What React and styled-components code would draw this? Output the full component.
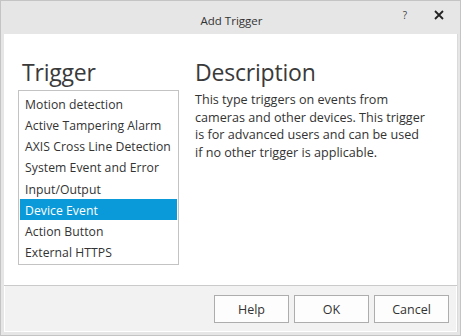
import React from "react";
import styled, { createGlobalStyle } from "styled-components";

const Global = createGlobalStyle`
  html, body { margin: 0; padding: 0; background: #e6e6e6; }
  body { font-family: "Open Sans", "Noto Sans", sans-serif; }
  * { box-sizing: border-box; }
`;

const Window = styled.div`
  width: 461px;
  height: 336px;
  border: 1px solid #c4c4c4;
  background: #e6e6e6;
  display: flex;
  flex-direction: column;
`;

const TitleBar = styled.div`
  height: 33px;
  position: relative;
  display: flex;
  align-items: center;
  justify-content: center;
  flex-shrink: 0;
`;

const Title = styled.div`
  font-size: 11.5px;
  color: #333;
  padding-top: 5px;
  padding-left: 2px;
`;

const Controls = styled.div`
  position: absolute;
  right: 16px;
  top: 7px;
  display: flex;
  align-items: center;
  gap: 27px;
`;

const HelpMark = styled.span`
  font-size: 10px;
  color: #444;
`;

const Body = styled.div`
  flex: 1;
  margin: 0 2px 3px 3px;
  background: #fff;
  border-right: 1px solid #dadada;
  display: flex;
  flex-direction: column;
`;

const Content = styled.div`
  flex: 1;
  display: flex;
  padding: 23px 0 0 14px;
  gap: 16px;
  border-bottom: 1px solid #cacaca;
`;

const Column = styled.div`
  display: flex;
  flex-direction: column;
  width: ${(p) => p.$w || "auto"};
`;

const Heading = styled.div`
  font-size: 23px;
  font-weight: 400;
  color: #3a3a3a;
  line-height: 30px;
  height: 30px;
  margin-left: ${(p) => p.$ml || 0}px;
  letter-spacing: -0.2px;
`;

const List = styled.div`
  margin-top: 3px;
  border: 1px solid #c3c3c3;
  height: 175px;
  padding: 1.5px 1px;
  display: flex;
  flex-direction: column;
`;

const Item = styled.div`
  height: 21.4px;
  line-height: 21.4px;
  padding: 1px 0 0 5px;
  font-size: 12.2px;
  color: ${(p) => (p.$sel ? "#fff" : "#333")};
  background: ${(p) => (p.$sel ? "#0a9ad9" : "transparent")};
  white-space: nowrap;
  letter-spacing: 0.05px;
  overflow: hidden;
`;

const Text = styled.p`
  margin: 4px 0 0 0;
  font-size: 12.6px;
  line-height: 17.5px;
  color: #333;
  white-space: nowrap;
`;

const Footer = styled.div`
  height: 45px;
  margin: 0 1px 1px 1px;
  background: #f2f2f2;
  display: flex;
  justify-content: flex-end;
  align-items: flex-start;
  padding: 9px 7px 0 0;
  gap: 5px;
`;

const Button = styled.button`
  width: 75px;
  height: 28px;
  border: 1px solid #adadad;
  background: #fdfdfd;
  font-family: inherit;
  font-size: 12.5px;
  color: #333;
  padding: 0;
`;

const items = [
  "Motion detection",
  "Active Tampering Alarm",
  "AXIS Cross Line Detection",
  "System Event and Error",
  "Input/Output",
  "Device Event",
  "Action Button",
  "External HTTPS",
];

export default function App() {
  return (
    <>
      <Global />
      <Window>
        <TitleBar>
          <Title>Add Trigger</Title>
          <Controls>
            <HelpMark>?</HelpMark>
            <svg width="10" height="10" viewBox="0 0 10 10">
              <path d="M1 1 L9 9 M9 1 L1 9" stroke="#222" strokeWidth="1.8" />
            </svg>
          </Controls>
        </TitleBar>
        <Body>
          <Content>
            <Column $w="161px">
              <Heading $ml={4}>Trigger</Heading>
              <List>
                {items.map((t) => (
                  <Item key={t} $sel={t === "Device Event"}>
                    {t}
                  </Item>
                ))}
              </List>
            </Column>
            <Column>
              <Heading>Description</Heading>
              <Text>
                This type triggers on events from
                <br />
                cameras and other devices. This trigger
                <br />
                is for advanced users and can be used
                <br />
                if no other trigger is applicable.
              </Text>
            </Column>
          </Content>
          <Footer>
            <Button>Help</Button>
            <Button>OK</Button>
            <Button>Cancel</Button>
          </Footer>
        </Body>
      </Window>
    </>
  );
}
